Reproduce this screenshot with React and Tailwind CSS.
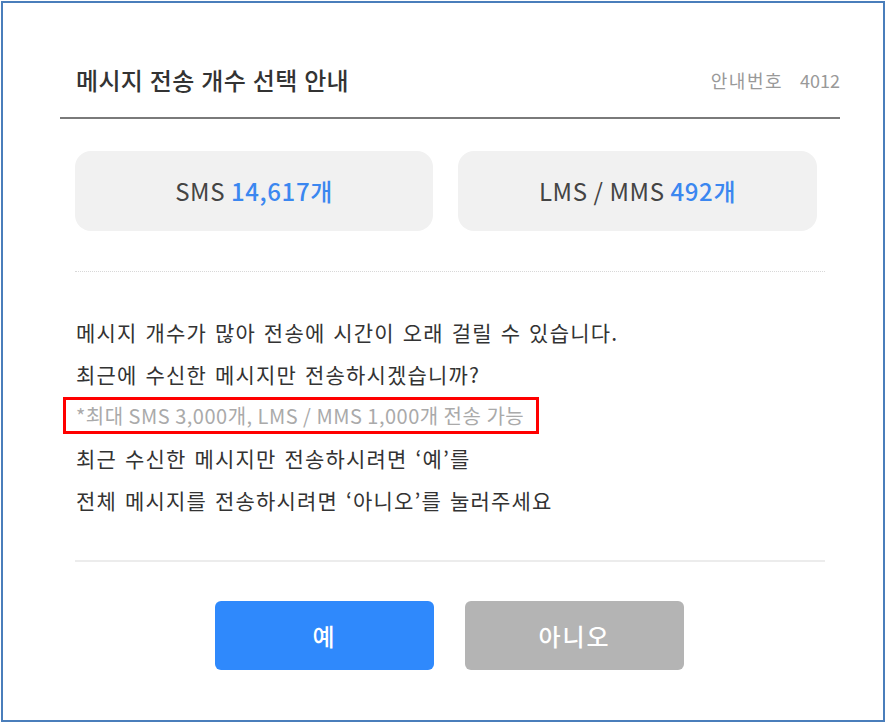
export default function App() {
  const font = { fontFamily: '"Noto Sans CJK KR", "Noto Sans", sans-serif' };

  return (
    <div className="w-[886px] h-[723px] bg-white p-px" style={font}>
      <div className="h-full border-2 border-[#4a7ebb] flex flex-col">
        {/* header */}
        <div className="ml-[57px] w-[780px] mt-[55px] h-[61px] border-b-2 border-[#7a7a7a] flex items-start justify-between">
          <h1 className="pl-[16px] text-[24px] leading-[44px] font-medium tracking-[0.3px] [word-spacing:1px] text-[#333]">메시지 전송 개수 선택 안내</h1>
          <div className="text-[18px] leading-[44px] text-[#999] flex gap-[17px]">
            <span className="tracking-[1.5px]">안내번호</span>
            <span>4012</span>
          </div>
        </div>

        {/* counts */}
        <div className="ml-[72px] mt-[32px] flex gap-[25px]">
          <div className="w-[358px] h-[80px] rounded-[16px] bg-[#f1f1f1] flex items-center justify-center text-[24px] tracking-[0.6px] text-[#444]">
            SMS&nbsp;<span className="text-[#3b87f0] font-medium">14,617개</span>
          </div>
          <div className="w-[359px] h-[80px] rounded-[16px] bg-[#f1f1f1] flex items-center justify-center text-[24px] tracking-[0.6px] text-[#444]">
            LMS / MMS&nbsp;<span className="text-[#3b87f0] font-medium">492개</span>
          </div>
        </div>

        <div className="ml-[72px] w-[750px] mt-[40px] border-t border-dotted border-[#d8d8d8]" />

        {/* message */}
        <div className="ml-[73px] mt-[40px] text-[21px] tracking-[1.2px] [word-spacing:2px] text-[#333]">
          <div className="h-[42px] flex items-center">메시지 개수가 많아 전송에 시간이 오래 걸릴 수 있습니다.</div>
          <div className="h-[42px] flex items-center">최근에 수신한 메시지만 전송하시겠습니까?</div>
          <div className="h-[42px] flex items-start">
            <div className="-ml-[13px] mt-px w-[476px] h-[37px] border-[3px] border-[#ff0000] pl-[10px] flex items-center text-[20px] tracking-[0.5px] [word-spacing:0px] text-[#aaa]">
              *최대 SMS 3,000개, LMS / MMS 1,000개 전송 가능
            </div>
          </div>
          <div className="h-[42px] flex items-center">최근 수신한 메시지만 전송하시려면 ‘예’를</div>
          <div className="h-[42px] flex items-center">전체 메시지를 전송하시려면 ‘아니오’를 눌러주세요</div>
        </div>

        <div className="ml-[72px] w-[750px] mt-[38px] border-t-2 border-[#ececec]" />

        {/* buttons */}
        <div className="mt-[39px] ml-[212px] flex gap-[31px]">
          <button className="w-[219px] h-[69px] rounded-[6px] bg-[#2f89fc] text-white text-[24px] tracking-[2px] font-medium">예</button>
          <button className="w-[219px] h-[69px] rounded-[6px] bg-[#b4b4b4] text-white text-[24px] tracking-[2px] font-medium">아니오</button>
        </div>
      </div>
    </div>
  );
}
